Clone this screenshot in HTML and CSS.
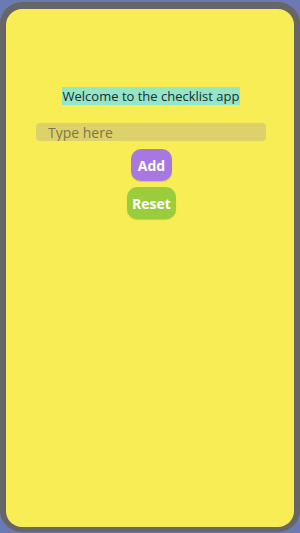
FILE: index.html
```html
<!DOCTYPE html>
<html lang="en">
<head>
    <meta charset="UTF-8">
    <meta name="viewport" content="width=device-width, initial-scale=1.0">
    <title>Checklist</title>
    <link rel="stylesheet" href="styles.css">
</head>
<body>
    <div class="phone">
        <div class="screen">
            <p class="welcome"><span>Welcome to the checklist app</span></p>
            <input type="text" class="item-input" placeholder="Type here">
            <button type="button" class="button add">Add</button>
            <button type="button" class="button reset">Reset</button>
        </div>
    </div>
</body>
</html>
```

FILE: styles.css
```css
* {
    margin: 0;
    padding: 0;
    box-sizing: border-box;
}

body {
    font-family: 'Open Sans', 'Noto Sans', sans-serif;
    background: #6b7ab2;
    padding-top: 2px;
    width: 300px;
    height: 533px;
    overflow: hidden;
}

.phone {
    width: 300px;
    height: 530px;
    background: #666;
    border-radius: 22px;
    padding: 7px 6px 5px 6px;
}

.screen {
    height: 100%;
    background: #f9ed55;
    border-radius: 16px;
    display: flex;
    flex-direction: column;
    align-items: center;
    padding-top: 79px;
}

.welcome {
    font-size: 13px;
    line-height: 17px;
    color: #1f2a2a;
    margin-left: 2px;
    margin-bottom: 18px;
}

.welcome span {
    background: #93e6c8;
    padding: 0 1px;
}

.item-input {
    width: 230px;
    height: 18px;
    margin-left: 2px;
    border: none;
    border-radius: 4px;
    background: #ddd26a;
    padding: 0 12px;
    font-family: inherit;
    font-size: 14px;
    color: #333;
}

.item-input::placeholder {
    color: #7d7748;
}

.button {
    font-family: 'Open Sans', sans-serif;
    font-weight: 700;
    font-size: 14px;
    color: white;
    border: none;
    border-radius: 10px;
    height: 32px;
    margin-left: 3px;
    box-shadow: 0 1px 1px rgba(0,0,0,0.15);
}

.add {
    background: #a878e2;
    width: 41px;
    margin-top: 8px;
}

.reset {
    background: #9acd3b;
    width: 49px;
    margin-top: 6px;
}
```
